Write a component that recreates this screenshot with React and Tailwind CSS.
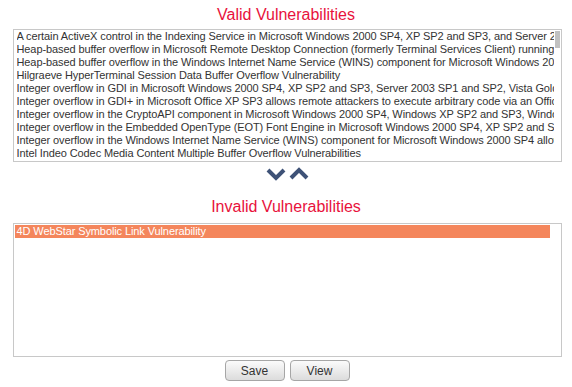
import React from "react";

const valid = [
  "A certain ActiveX control in the Indexing Service in Microsoft Windows 2000 SP4, XP SP2 and SP3, and Server 2003 SP1 and SP2 does not properly handle URLs",
  "Heap-based buffer overflow in Microsoft Remote Desktop Connection (formerly Terminal Services Client) running RDP allows remote attackers",
  "Heap-based buffer overflow in the Windows Internet Name Service (WINS) component for Microsoft Windows 2000 SP4 allows remote attackers",
  "Hilgraeve HyperTerminal Session Data Buffer Overflow Vulnerability",
  "Integer overflow in GDI in Microsoft Windows 2000 SP4, XP SP2 and SP3, Server 2003 SP1 and SP2, Vista Gold and SP1 allows remote attackers",
  "Integer overflow in GDI+ in Microsoft Office XP SP3 allows remote attackers to execute arbitrary code via an Office Art record",
  "Integer overflow in the CryptoAPI component in Microsoft Windows 2000 SP4, Windows XP SP2 and SP3, Windows Server 2003 SP2",
  "Integer overflow in the Embedded OpenType (EOT) Font Engine in Microsoft Windows 2000 SP4, XP SP2 and SP3, Server 2003 SP2",
  "Integer overflow in the Windows Internet Name Service (WINS) component for Microsoft Windows 2000 SP4 allows remote attackers",
  "Intel Indeo Codec Media Content Multiple Buffer Overflow Vulnerabilities",
];

function Down() {
  return (
    <svg width="20" height="14" viewBox="0 0 20 14">
      <path d="M2 3 L10 11 L18 3" fill="none" stroke="#3e5277" strokeWidth="4" strokeLinecap="butt" strokeLinejoin="miter" />
    </svg>
  );
}
function Up() {
  return (
    <svg width="20" height="14" viewBox="0 0 20 14">
      <path d="M2 11 L10 3 L18 11" fill="none" stroke="#3e5277" strokeWidth="4" strokeLinecap="butt" strokeLinejoin="miter" />
    </svg>
  );
}

export default function App() {
  const font = { fontFamily: '"Liberation Sans", Arial, sans-serif' };
  return (
    <div className="w-[572px] h-[387px] bg-white flex flex-col items-center overflow-hidden" style={font}>
      <div className="h-[29px] flex items-center justify-center text-[16px] text-[#e8123c]">
        Valid Vulnerabilities
      </div>
      <div className="relative w-[549px] h-[133px] border border-[#c8c8c8] ml-[2px] overflow-hidden">
        <div className="pl-[3px] pr-[7px] text-[11px] leading-[13px] tracking-[-0.1px] text-[#333333] whitespace-nowrap overflow-hidden">
          {valid.map((v, i) => (
            <div key={i} className="h-[13px] overflow-hidden">{v}</div>
          ))}
        </div>
        <div className="absolute right-[0px] top-0 w-[6px] h-full bg-white">
          <div className="mt-[1px] w-[5px] h-[17px] bg-[#c1c1c1]" />
        </div>
      </div>
      <div className="h-[23px] flex items-center justify-center gap-[3px] pl-[2px]">
        <Down />
        <Up />
      </div>
      <div className="h-[38px] pt-[6px] flex items-center justify-center text-[16px] text-[#e8123c]">
        Invalid Vulnerabilities
      </div>
      <div className="w-[549px] h-[134px] border border-[#c8c8c8] ml-[2px] pt-[1px] pl-[1px] pr-[11px]">
        <div className="h-[13px] bg-[#f4865c] text-white text-[11px] leading-[13px] tracking-[-0.1px] pl-[2px] whitespace-nowrap">
          4D WebStar Symbolic Link Vulnerability
        </div>
      </div>
      <div className="flex gap-[5px] mt-[3px] ml-[2px]">
        <button className="w-[60px] h-[21px] rounded-[4px] border border-[#a6a6a6] bg-gradient-to-b from-[#fbfbfb] to-[#dcdcdc] text-[12px] text-[#333]">
          Save
        </button>
        <button className="w-[60px] h-[21px] rounded-[4px] border border-[#a6a6a6] bg-gradient-to-b from-[#fbfbfb] to-[#dcdcdc] text-[12px] text-[#333]">
          View
        </button>
      </div>
    </div>
  );
}
